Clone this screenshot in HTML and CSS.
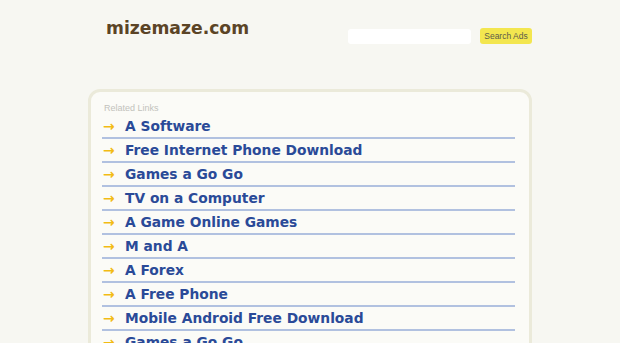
FILE: index.html
```html
<!DOCTYPE html>
<html>
<head>
<meta charset="utf-8">
<link rel="stylesheet" href="styles.css">
</head>
<body>
<div class="page">
  <header class="header">
    <div class="logo">mizemaze.com</div>
    <form class="search">
      <input class="search-input" type="text">
      <button class="search-btn" type="button">Search Ads</button>
    </form>
  </header>
  <section class="box">
    <div class="box-title">Related Links</div>
    <ul class="links">
      <li class="link"><span class="arrow">→</span><a href="#">A Software</a></li>
      <li class="link"><span class="arrow">→</span><a href="#">Free Internet Phone Download</a></li>
      <li class="link"><span class="arrow">→</span><a href="#">Games a Go Go</a></li>
      <li class="link"><span class="arrow">→</span><a href="#">TV on a Computer</a></li>
      <li class="link"><span class="arrow">→</span><a href="#">A Game Online Games</a></li>
      <li class="link"><span class="arrow">→</span><a href="#">M and A</a></li>
      <li class="link"><span class="arrow">→</span><a href="#">A Forex</a></li>
      <li class="link"><span class="arrow">→</span><a href="#">A Free Phone</a></li>
      <li class="link"><span class="arrow">→</span><a href="#">Mobile Android Free Download</a></li>
      <li class="link"><span class="arrow">→</span><a href="#">Games a Go Go</a></li>
    </ul>
  </section>
</div>
</body>
</html>
```

FILE: styles.css
```css
html, body {
  margin: 0;
  padding: 0;
  background: #f7f7f2;
  overflow: hidden;
}
.page {
  width: 444px;
  margin: 0 auto;
  font-family: "DejaVu Sans", sans-serif;
}
.header {
  display: flex;
  justify-content: space-between;
  align-items: flex-start;
  height: 89px;
}
.logo {
  margin: 17px 0 0 18px;
  font-size: 17.2px;
  line-height: 22px;
  font-weight: bold;
  color: #5b4426;
}
.search {
  display: flex;
  align-items: center;
  gap: 9px;
  margin: 28px 0 0 0;
}
.search-input {
  width: 123px;
  height: 15px;
  box-sizing: border-box;
  border: none;
  border-radius: 3px;
  background: #ffffff;
  padding: 0;
  margin: 0;
}
.search-btn {
  width: 52px;
  height: 16px;
  box-sizing: border-box;
  border: none;
  border-radius: 3px;
  background: #f3e64f;
  color: #5c5c4a;
  font-family: "Liberation Sans", Arial, sans-serif;
  font-size: 8.5px;
  padding: 0;
  margin: 0;
}
.box {
  border: 3px solid #ebeada;
  border-radius: 12px;
  background: #fbfbf7;
  padding: 9px 14px 0 11px;
  height: 300px;
}
.box-title {
  font-family: "Liberation Sans", Arial, sans-serif;
  font-size: 9px;
  line-height: 14px;
  color: #c2c2bc;
  padding-left: 2px;
}
.links {
  list-style: none;
  margin: 0;
  padding: 0;
}
.link {
  display: flex;
  align-items: center;
  height: 22px;
  border-bottom: 2px solid #b1c1e0;
}
.arrow {
  width: 22px;
  padding-left: 1px;
  color: #f2bb14;
  font-size: 14px;
  font-weight: bold;
}
.link a {
  color: #2a4a98;
  font-size: 13.8px;
  font-weight: bold;
  text-decoration: none;
}
```
